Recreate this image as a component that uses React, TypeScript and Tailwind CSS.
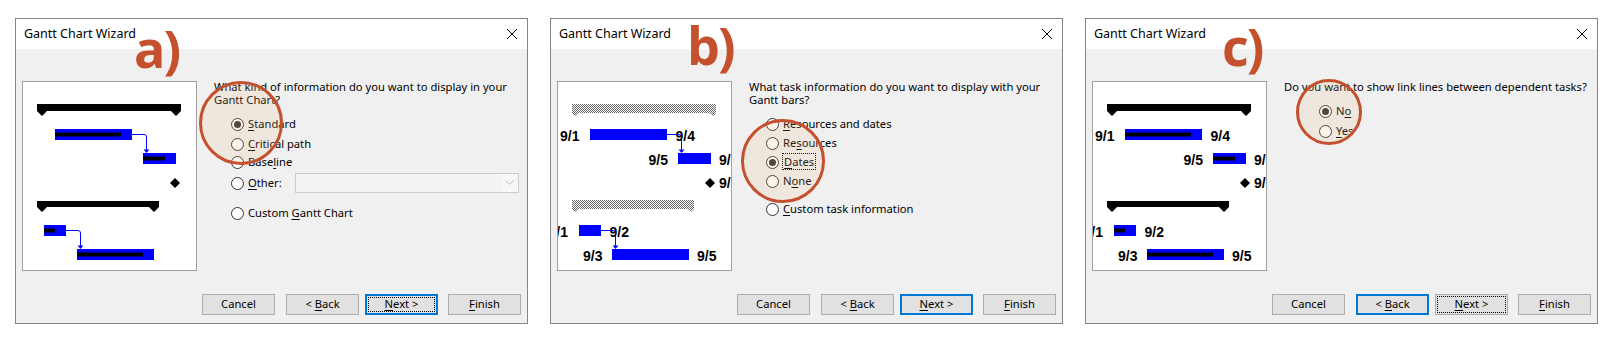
import React from 'react'

type ChartKind = 'a' | 'b' | 'c'

type Opt = {
  label: React.ReactNode
  mt: string
  checked?: boolean
  dropdown?: boolean
}

type Cfg = {
  letter: string
  letterCls: string
  circleCls: string
  question: React.ReactNode
  indent: string
  options: Opt[]
  chart: ChartKind
  back?: 'default'
  next: 'defaultFocus' | 'default' | 'focus'
}

const U = ({ c }: { c: string }) => <span className="underline underline-offset-[2px]">{c}</span>

function Chart({ v }: { v: ChartKind }) {
  const progress = v !== 'b'
  const links = v !== 'c'
  const labels = v !== 'a'
  const sum1 = 'M15 23H159V30L154 35L149 30H25L20 35L15 30Z'
  const sum2 = 'M15 120H137V126L132 131L127 126H25L20 131L15 126Z'
  const dates: [string, number, number][] = [
    ['9/1', 3, 60],
    ['9/4', 118.5, 60],
    ['9/5', 91.5, 84],
    ['9/5', 162, 84],
    ['9/5', 162, 107],
    ['9/1', -8.5, 156],
    ['9/2', 52.5, 156],
    ['9/3', 26, 180],
    ['9/5', 140, 180],
  ]
  return (
    <svg width="173" height="188" viewBox="1 1 173 188" className="block">
      <defs>
        <pattern id={`dither-${v}`} width="2" height="2" patternUnits="userSpaceOnUse">
          <rect width="2" height="2" fill="#fff" />
          <rect width="1" height="1" fill="#666" />
          <rect x="1" y="1" width="1" height="1" fill="#666" />
        </pattern>
      </defs>
      {v === 'b' ? (
        <>
          <path d="M15 23H159V32L156 35L152 32H22L18 35L15 32Z" fill={`url(#dither-${v})`} />
          <path d="M15 119H137V128L134 131L130 128H22L18 131L15 128Z" fill={`url(#dither-${v})`} />
        </>
      ) : (
        <>
          <path d={sum1} fill="#000" />
          <path d={sum2} fill="#000" />
        </>
      )}

      <rect x="33" y="48" width="77" height="11" fill="#0000ff" />
      <rect x="121" y="72" width="33" height="11" fill="#0000ff" />
      <rect x="22" y="144" width="22" height="11" fill="#0000ff" />
      <rect x="55" y="168" width="77" height="11" fill="#0000ff" />
      {progress && (
        <g fill="#000">
          <rect x="33" y="51.5" width="66" height="4" />
          <rect x="121" y="75.5" width="22" height="4" />
          <rect x="22" y="147.5" width="11" height="4" />
          <rect x="55" y="171.5" width="66" height="4" />
        </g>
      )}

      <path d="M148 102L153 97L158 102L153 107Z" fill="#000" />

      {labels && (
        <g fontFamily="'Liberation Sans', Arial, sans-serif" fontWeight="700" fontSize="14" fill="#000">
          {dates.map(([t, x, y], i) => (
            <text key={i} x={x} y={y}>
              {t}
            </text>
          ))}
        </g>
      )}

      {links && (
        <g stroke="#0000ff" strokeWidth="1" fill="none">
          <path d="M110 53.5H122Q124.5 53.5 124.5 56V69" />
          <path d="M44 149.5H56Q58.5 149.5 58.5 152V165" />
          <path d="M121.5 68.5H127.5L124.5 72Z" fill="#0000ff" stroke="none" />
          <path d="M55.5 164.5H61.5L58.5 168Z" fill="#0000ff" stroke="none" />
        </g>
      )}
    </svg>
  )
}

function Radio({ checked }: { checked?: boolean }) {
  return (
    <span className="w-[13px] h-[13px] rounded-full border border-[#333] bg-white flex items-center justify-center shrink-0">
      {checked && <span className="w-[7px] h-[7px] rounded-full bg-[#333]" />}
    </span>
  )
}

function Btn({ children, kind }: { children: React.ReactNode; kind?: 'default' | 'defaultFocus' | 'focus' }) {
  const border =
    kind === 'default' || kind === 'defaultFocus' ? 'border-2 border-[#0078d7]' : 'border border-[#adadad]'
  return (
    <div className={`relative w-[73px] h-[21px] bg-[#e1e1e1] ${border} flex items-center justify-center`}>
      {(kind === 'defaultFocus' || kind === 'focus') && (
        <span className="absolute inset-[1px] border border-dotted border-black" />
      )}
      <span className="relative">{children}</span>
    </div>
  )
}

function Wizard({ cfg }: { cfg: Cfg }) {
  return (
    <div className="relative w-[513px] h-[306px] shrink-0 border border-[#848484] bg-[#f0f0f0] flex flex-col text-[11.2px] text-black font-['Noto_Sans',sans-serif]">
      <div className="h-[30px] bg-white flex items-center justify-between pl-[8px] pr-[9px]">
        <span className="text-[12.5px]">Gantt Chart Wizard</span>
        <svg width="12" height="12" viewBox="0 0 12 12">
          <path d="M1 1L11 11M11 1L1 11" stroke="#000" strokeWidth="1" />
        </svg>
      </div>

      <div className="flex-1 flex flex-col">
        <div className="flex pt-[32px] pl-[6px] pr-[8px]">
          <div className="w-[175px] h-[190px] border border-[#a0a0a0] bg-white shrink-0 overflow-hidden">
            <Chart v={cfg.chart} />
          </div>
          <div className="flex-1 ml-[17px] flex flex-col">
            <div className="leading-[13px] mt-[-1px] whitespace-nowrap">{cfg.question}</div>
            <div className={`flex flex-col ${cfg.indent}`}>
              {cfg.options.map((o, i) => (
                <div key={i} className={`flex items-center ${o.dropdown ? 'h-[20px]' : 'h-[18px]'} ${o.mt}`}>
                  <Radio checked={o.checked} />
                  <span className="ml-[4px] whitespace-nowrap">{o.label}</span>
                  {o.dropdown && (
                    <div className="ml-auto w-[224px] h-[20px] border border-[#cccccc] bg-[#f3f3f3] flex justify-end items-center">
                      <div className="w-[17px] h-full flex items-center justify-center bg-[#f7f7f7]">
                        <svg width="9" height="6" viewBox="0 0 9 6">
                          <path d="M0.5 0.5L4.5 4.5L8.5 0.5" stroke="#bdbdbd" fill="none" />
                        </svg>
                      </div>
                    </div>
                  )}
                </div>
              ))}
            </div>
          </div>
        </div>

        <div className="mt-auto flex justify-end pr-[6px] pb-[8px]">
          <Btn>Cancel</Btn>
          <div className="ml-[11px]">
            <Btn kind={cfg.back}>
              &lt; <U c="B" />ack
            </Btn>
          </div>
          <div className="ml-[6px]">
            <Btn kind={cfg.next}>
              <U c="N" />ext &gt;
            </Btn>
          </div>
          <div className="ml-[10px]">
            <Btn>
              <U c="F" />inish
            </Btn>
          </div>
        </div>
      </div>

      <div className={`absolute rounded-full border-[3px] border-[#c4502d] bg-[rgba(235,185,130,0.16)] pointer-events-none ${cfg.circleCls}`} />
      <div
        className={`absolute text-[52px] leading-none font-bold text-[#c4502d] tracking-[-2px] font-['Open_Sans',sans-serif] pointer-events-none ${cfg.letterCls}`}
      >
        {cfg.letter}
      </div>
    </div>
  )
}

const dialogs: Cfg[] = [
  {
    letter: 'a)',
    letterCls: 'left-[118px] top-[3px]',
    circleCls: 'left-[183px] top-[62px] w-[84px] h-[84px]',
    question: (
      <>
        What kind of information do you want to display in your
        <br />
        Gantt Chart?
      </>
    ),
    indent: 'pl-[17px]',
    chart: 'a',
    next: 'defaultFocus',
    options: [
      { label: <><U c="S" />tandard</>, mt: 'mt-[9px]', checked: true },
      { label: <><U c="C" />ritical path</>, mt: 'mt-[2px]' },
      { label: <>Base<U c="l" />ine</>, mt: 'mt-0' },
      { label: <><U c="O" />ther:</>, mt: 'mt-[2px]', dropdown: true },
      { label: <>Custom <U c="G" />antt Chart</>, mt: 'mt-[11px]' },
    ],
  },
  {
    letter: 'b)',
    letterCls: 'left-[136px] top-[0px]',
    circleCls: 'left-[190px] top-[100px] w-[84px] h-[84px]',
    question: (
      <>
        What task information do you want to display with your
        <br />
        Gantt bars?
      </>
    ),
    indent: 'pl-[17px]',
    chart: 'b',
    next: 'default',
    options: [
      { label: <><U c="R" />esources and dates</>, mt: 'mt-[9px]' },
      { label: <>Re<U c="s" />ources</>, mt: 'mt-[1px]' },
      {
        label: (
          <span className="outline outline-1 outline-dotted outline-black px-[1px]">
            <U c="D" />ates
          </span>
        ),
        mt: 'mt-[1px]',
        checked: true,
      },
      { label: <>N<U c="o" />ne</>, mt: 'mt-[1px]' },
      { label: <><U c="C" />ustom task information</>, mt: 'mt-[10px]' },
    ],
  },
  {
    letter: 'c)',
    letterCls: 'left-[136px] top-[1px]',
    circleCls: 'left-[210px] top-[60px] w-[66px] h-[66px]',
    question: <>Do you want to show link lines between dependent tasks?</>,
    indent: 'pl-[35px]',
    chart: 'c',
    back: 'default',
    next: 'focus',
    options: [
      { label: <>N<U c="o" /></>, mt: 'mt-[9px]', checked: true },
      { label: <><U c="Y" />es</>, mt: 'mt-[2px]' },
    ],
  },
]

export default function App() {
  return (
    <div className="w-[1616px] h-[341px] bg-white flex gap-[22px] pl-[15px] pt-[18px]">
      {dialogs.map((d, i) => (
        <Wizard key={i} cfg={d} />
      ))}
    </div>
  )
}
